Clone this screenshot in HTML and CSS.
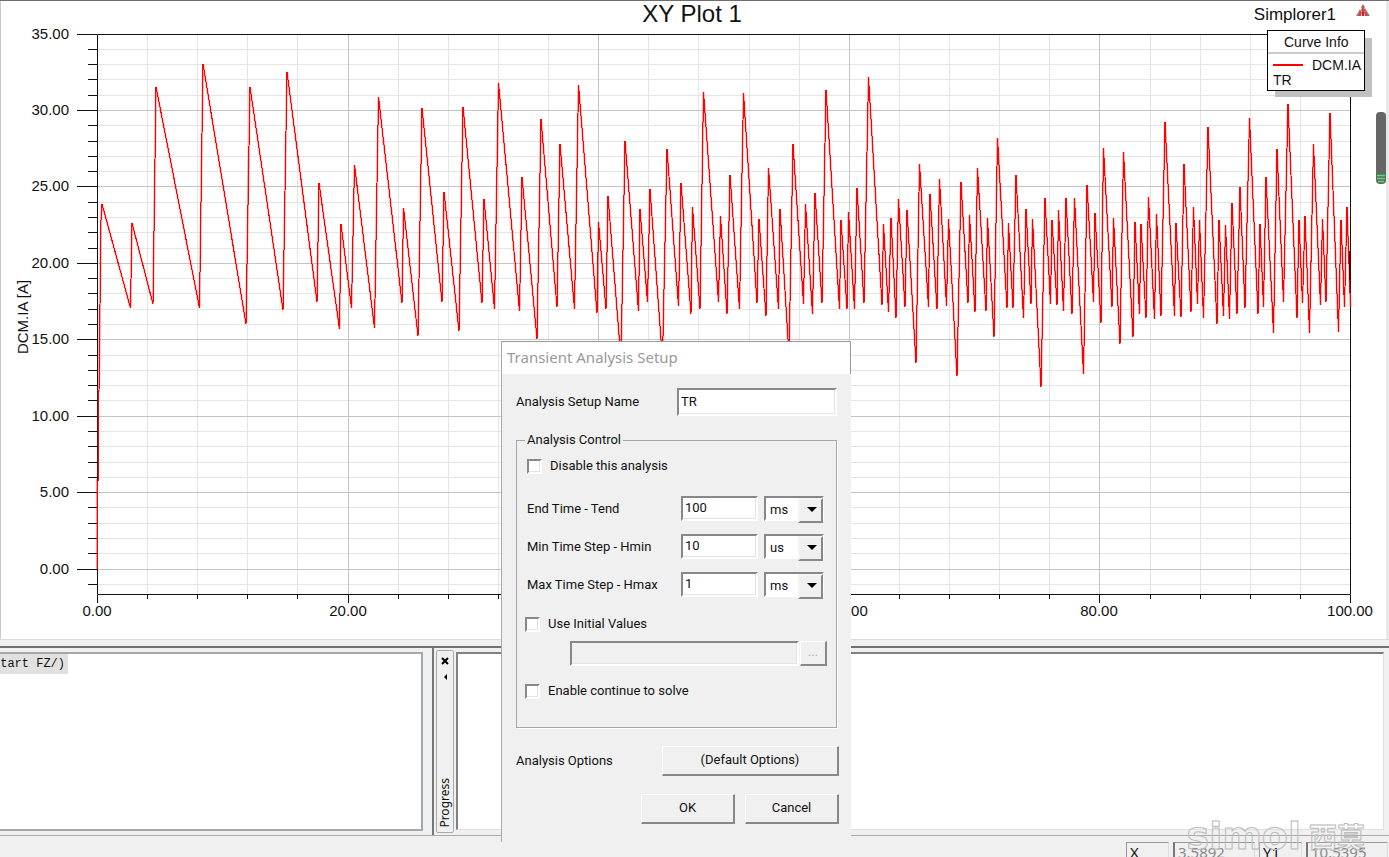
FILE: index.html
```html
<!DOCTYPE html>
<html lang="en">
<head>
<meta charset="utf-8">
<title>XY Plot 1</title>
<link rel="stylesheet" href="styles.css">
</head>
<body>
<main class="plot">
  <svg class="chart" viewBox="0 0 1389 640" role="img" aria-label="XY Plot 1, DCM.IA over time">
    <g id="grid"></g>
    <g id="axes"></g>
    <polyline class="curve curve-soft"/>
    <polyline class="curve curve-core"/>
    <path class="end-mark" d="M1350 251V280"/>
    <text class="title" x="692" y="22">XY Plot 1</text>
    <text class="axis-name" transform="translate(28 317) rotate(-90)">DCM.IA [A]</text>
    <text class="project" x="1336" y="20">Simplorer1</text>
    <path fill="#8a8a8a" d="M1363 4l2 3-2 3-2-3zM1365 8l5 8h-4l-2-5zM1360 9l1 2-2 5h-3z"/>
    <path fill="#e23b3b" d="M1363 6l2 4-1 2h-2l-1-2zM1360 11l2 1-1 4h-3zM1364 12l2 0 2 4h-3z"/>
    <path fill="#d02020" d="M1362 12h2v4h-2z"/>
    <rect class="legend-shadow" x="1275" y="38" width="97" height="59"/>
    <rect class="legend-box" x="1267.5" y="30.5" width="97" height="60"/>
    <path class="legend-rule" d="M1268 53H1364"/>
    <path class="legend-key" d="M1273 65H1303"/>
    <text class="legend-text" x="1284" y="47">Curve Info</text>
    <text class="legend-text" x="1312" y="70">DCM.IA</text>
    <text class="legend-text" x="1273" y="85">TR</text>
    <rect x="1376" y="112" width="10" height="72" rx="4" fill="#666"/>
    <path d="M1377 175.500H1385M1377 178.500H1385M1378 181.500H1384" stroke="#4be36a" stroke-width="1.500" fill="none"/>
  </svg>
</main>

<section class="docks">
  <div class="dock messages"><div class="message-list"><span class="message">tart FZ/)</span></div></div>
  <div class="dock progress">
    <div class="dock-tab">
      <button class="tab-button" aria-label="Close"><svg width="8" height="8" viewBox="0 0 8 8"><path d="M1 1L7 7M7 1L1 7" stroke="#000" stroke-width="2"/></svg></button>
      <button class="tab-button" aria-label="Collapse"><svg width="8" height="8" viewBox="0 0 8 8"><path d="M6 1V7L3 4z"/></svg></button>
      <span class="dock-title">Progress</span>
    </div>
    <div class="progress-view"></div>
  </div>
</section>

<footer class="status">
  <span class="cell name">X</span><span class="cell value">3.5892</span>
  <span class="cell name">Y1</span><span class="cell value">10.5395</span>
</footer>
<div class="watermark" aria-hidden="true"><span class="mark-latin">simol</span><span class="mark-cjk">西莫</span></div>

<form class="dialog" role="dialog" aria-labelledby="dialog-title">
  <h1 class="dialog-title" id="dialog-title">Transient Analysis Setup</h1>
  <div class="dialog-body">
    <div class="row name-row">
      <label for="setup">Analysis Setup Name</label>
      <input class="box" id="setup" type="text" value="TR">
    </div>
    <fieldset class="group">
      <legend>Analysis Control</legend>
      <label class="check first"><input type="checkbox">Disable this analysis</label>
      <div class="times">
        <label for="tend">End Time - Tend</label>
        <input class="box" id="tend" type="text" value="100">
        <span class="combo"><select aria-label="End time unit"><option>ms</option><option>us</option></select></span>
        <label for="hmin">Min Time Step - Hmin</label>
        <input class="box" id="hmin" type="text" value="10">
        <span class="combo"><select aria-label="Min step unit"><option>us</option><option>ms</option></select></span>
        <label for="hmax">Max Time Step - Hmax</label>
        <input class="box" id="hmax" type="text" value="1">
        <span class="combo"><select aria-label="Max step unit"><option>ms</option><option>us</option></select></span>
      </div>
      <label class="check"><input type="checkbox">Use Initial Values</label>
      <div class="file-row">
        <input class="box" type="text" aria-label="Initial values file" disabled>
        <button class="push browse" type="button" disabled>...</button>
      </div>
      <label class="check"><input type="checkbox">Enable continue to solve</label>
    </fieldset>
    <div class="row options-row">
      <span>Analysis Options</span>
      <button class="push wide" type="button">(Default Options)</button>
    </div>
    <div class="actions">
      <button class="push" type="button">OK</button>
      <button class="push" type="button">Cancel</button>
    </div>
  </div>
</form>
<script src="chart.js"></script>
</body>
</html>
```
FILE: styles.css
```css
* { box-sizing: border-box; }
body {
  margin: 0;
  height: 100vh;
  display: flex;
  flex-direction: column;
  overflow: hidden;
  position: relative;
  background: #f0f0f0;
  color: #111;
  font: 13px/18px Roboto, "Liberation Sans", sans-serif;
}
button, input, select { font: inherit; color: inherit; }

.plot {
  flex: none;
  background: #fff;
  border: solid #dcdcdc;
  border-width: 0 0 1px;
  box-shadow: inset 0 1px #6e6e6e, inset 1px 0 #c8c8c8, inset -3px 0 #e8e8e8;
}
.chart { display: block; width: 100%; height: auto; margin-bottom: -1px; font-family: "Liberation Sans", Arial, sans-serif; }
.chart text { fill: #111; }
.grid-minor { stroke: #e5e5e5; fill: none; }
.grid-major { stroke: #c4c4c4; fill: none; }
.axis { stroke: #111; fill: none; }
.curve { stroke: #f00; fill: none; }
.curve-soft { stroke-width: 2px; opacity: 0.4; }
.curve-core { shape-rendering: crispEdges; }
.end-mark { stroke: #500; stroke-width: 2px; }
.tick { font-size: 15px; }
.tick.y { text-anchor: end; }
.tick.x, .title, .axis-name { text-anchor: middle; }
.axis-name { font-size: 15px; }
.title { font-size: 24px; }
.project { font-size: 17px; text-anchor: end; }
.legend-shadow { fill: #c0c0c0; }
.legend-box { fill: #fff; stroke: #000; }
.legend-rule { stroke: #ccc; stroke-width: 2px; }
.legend-key { stroke: #f00; stroke-width: 2px; }
.legend-text { font-size: 14px; }

.docks {
  flex: 1;
  min-height: 0;
  display: flex;
  margin-top: 6px;
  border-top: 2px solid #707070;
  border-bottom: 1px solid #aaa;
}
.messages { width: 31.250%; flex: none; padding: 4px 9px 4px 0; border-right: 2px solid #777; }
.message-list { height: 100%; background: #fff; border: 2px solid #a2a8ae; border-left: 0; }
.message {
  display: flex;
  justify-content: flex-end;
  width: 68px;
  height: 20px;
  padding-right: 3px;
  overflow: hidden;
  white-space: nowrap;
  background: #e1e1e1;
  font: 12px/20px "Liberation Mono", monospace;
}
.progress { flex: 1; display: flex; gap: 2px; padding: 2px 5px 2px 2px; }
.dock-tab {
  width: 18px;
  display: flex;
  flex-direction: column;
  align-items: center;
  gap: 8px;
  padding: 6px 0 4px;
  border: 1px solid #aaa;
  border-radius: 2px;
}
.tab-button { display: block; width: 8px; height: 8px; padding: 0; border: 0; background: none; line-height: 0; }
.dock-title {
  margin-top: auto;
  writing-mode: vertical-rl;
  transform: rotate(180deg);
  font: 12px/16px "Noto Sans", sans-serif;
}
.progress-view { flex: 1; margin: 2px 0 3px; background: #fff; border: 1px solid #e0e0e0; border-top: 2px solid #808080; border-left: 2px solid #808080; }

.status {
  flex: none;
  height: 21px;
  display: flex;
  justify-content: flex-end;
  gap: 4px;
  padding: 6px 1px 0 0;
  overflow: hidden;
  font: 15px/19px "Noto Sans", sans-serif;
}
.cell { height: 24px; padding-left: 3px; border: solid #999; border-width: 1px 0 0 1px; border-right: 1px solid #ddd; }
.cell.name { width: 43px; }
.cell.value { width: 82px; color: #888; border-left: 2px solid #777; }
.watermark {
  position: absolute;
  right: 24px;
  bottom: 2px;
  display: flex;
  gap: 8px;
  color: transparent;
  -webkit-text-stroke: 1px #bbb;
}
.mark-latin { font: bold 38px/38px "DejaVu Sans", sans-serif; }
.mark-cjk { font: bold 28px/38px "Noto Sans CJK SC", sans-serif; }

.dialog {
  position: absolute;
  left: 501px;
  top: 341px;
  width: 350px;
  background: #f0f0f0;
  border-left: 1px solid #aaa;
}
.dialog-title {
  margin: 0;
  height: 33px;
  padding-left: 5px;
  background: #fff;
  border: solid #999;
  border-width: 1px 1px 0 0;
  color: #999;
  font: 15px/31px "Noto Sans", sans-serif;
}
.dialog-body { padding: 14px 14px 18px 14px; }
.row { display: flex; align-items: center; justify-content: space-between; }
.box {
  min-width: 0;
  height: 25px;
  padding: 0 2px 2px;
  background: #fff;
  border: 2px solid #fff;
  border-top-color: #888;
  border-left-color: #888;
  box-shadow: inset -1px -1px #e3e3e3;
}
.box:disabled { background: #f0f0f0; }
.name-row .box { width: 160px; height: 28px; }
.group {
  margin: 15px 0 0;
  padding: 8px 12px 27px 8px;
  border: 1px solid #a5a5a5;
  box-shadow: 1px 1px #fff;
}
.group legend { padding: 0 2px; }
.check { display: flex; align-items: center; gap: 8px; }
.check.first { padding-left: 2px; }
.check input {
  appearance: none;
  width: 15px;
  height: 15px;
  margin: 0;
  background: #fff;
  border: 2px solid #fff;
  border-top-color: #888;
  border-left-color: #888;
  box-shadow: inset -1px -1px #e3e3e3;
}
.times {
  display: grid;
  grid-template-columns: 1fr 77px 60px;
  column-gap: 6px;
  row-gap: 13px;
  align-items: center;
  margin: 21px 0 18px;
  padding-left: 2px;
}
.combo { position: relative; height: 25px; }
.combo select {
  appearance: none;
  width: 100%;
  height: 100%;
  padding: 2px 20px 0 4px;
  background: #fff;
  border: 2px solid #fff;
  border-top-color: #888;
  border-left-color: #888;
  border-radius: 0;
}
.combo::before {
  content: "";
  position: absolute;
  right: 1px;
  top: 2px;
  width: 21px;
  height: 21px;
  background: #f0f0f0;
  border: 2px solid #888;
  border-top-color: #f4f4f4;
  border-left-color: #f4f4f4;
  pointer-events: none;
}
.combo::after {
  content: "";
  position: absolute;
  right: 7px;
  top: 11px;
  border: 5px solid transparent;
  border-top-color: #000;
  border-bottom: 0;
  pointer-events: none;
}
.file-row { display: flex; gap: 1px; margin: 8px -3px 16px 0; padding-left: 45px; }
.file-row .box { flex: 1; }
.push {
  height: 30px;
  width: 94px;
  padding: 0 0 2px;
  background: #f0f0f0;
  border: 2px solid #888;
  border-top: 1px solid #fff;
  border-left: 1px solid #fff;
}
.push.browse { width: 27px; height: 25px; color: #aaa; }
.push.wide { width: 177px; }
.options-row, .actions { margin-right: -2px; }
.options-row { margin-top: 18px; }
.actions { display: flex; justify-content: flex-end; gap: 10px; margin-top: 18px; }
```
FILE: chart.js
```js
const X0 = 97, X1 = 1350, Y35 = 34, Y0 = 569, BOTTOM = 595;
const sx = t => Math.round(X0 + t * (X1 - X0) / 100);
const sy = v => Math.floor(Y0 - v * (Y0 - Y35) / 35);
const grid = document.getElementById("grid");
const axes = document.getElementById("axes");

function add(parent, name, attrs, text) {
  const el = document.createElementNS("http://www.w3.org/2000/svg", name);
  for (const k in attrs) el.setAttribute(k, attrs[k]);
  if (text) el.textContent = text;
  parent.appendChild(el);
}

let minor = "", major = "", ticks = "";
for (let v = -1; v <= 35; v++) {
  const big = v % 5 === 0, y = sy(v) + 0.5;
  const line = `M${X0} ${y}H${X1}`;
  if (big) major += line; else minor += line;
  ticks += `M${big ? 77 : 88} ${y}H${X0}`;
  if (big) add(axes, "text", { class: "tick y", x: 69, y: sy(v) + 5 }, v.toFixed(2));
}
for (let t = 0; t <= 100; t += 4) {
  const big = t % 20 === 0, x = sx(t) + 0.5;
  const line = `M${x} ${Y35}V${BOTTOM}`;
  if (big) major += line; else minor += line;
  ticks += `M${x} ${BOTTOM}V${big ? 603 : 599}`;
  if (big) add(axes, "text", { class: "tick x", x: sx(t), y: 616 }, t.toFixed(2));
}
add(grid, "path", { class: "grid-minor", d: minor });
add(grid, "path", { class: "grid-major", d: major });
add(axes, "path", { class: "axis", d: ticks + `M${X0 + 0.5} ${Y35 + 0.5}H${X1 + 0.5}V${BOTTOM - 0.5}H${X0 + 0.5}Z` });

const points = `
97,569 97,480 98,480 98,391 99,391 100,305 101,220 102,204 130.5,308 132,223 153,304 156,87 199.5,308 203,64 246,324 250,87 283,310 287,72 317,302 319,183 339.5,329 341,224 351.5,308
354.5,165 374.5,328 378.5,97 402,303 403.5,208 418,336 422,108 442,302 444,192 459,331 463,107 482,303 484,199 494.5,309 498.5,83 519.5,311 522,177 537,339 541,119 557,307 560,144 574.5,309 578.5,85 597,313 598.5,222 606,309 608,196 621,360 625,141 638.5,311 640,209 647.5,302 650,189 662.5,360 667,149 678.5,306 681,183 691,314 692.5,207 700,309
703.5,92 718.5,302 720.5,216 727,314 730,175 739.5,309 743.5,93 757,303 759,219 766,316 768.5,168 778.5,309 780,209 789,355 793,144 803.5,304 805.5,204 812.5,314 815,193 822,303 826,90 839.5,309 841,220 847,309 848.5,212 854.5,309 857,188 864,303 868.5,77 882,305 883.5,224 888.5,312 891,218 896,318 898.5,199 905,307 907,210 916,363 919.5,164 928.5,307 930,194 937,309 939.5,179 946.5,306 948.5,219 957,376 961,182 968,303 969.5,215 975,312 977.5,168 986,311 987.5,218 994,337 997.5,138 1007,308 1008.5,223 1013,308 1016,175 1023.5,318 1026,209 1031,304 1032.5,219 1041,387 1045,198 1050.5,304
1052,220 1057,305 1058.5,210 1063.5,311 1066,198 1072,314 1074.5,198 1083.5,374 1087,185 1093.5,302 1095,213 1101,323 1103.5,148 1112,307 1113.5,218 1120,344 1123.5,152 1133,337 1135,222 1139.5,314 1141,224 1146,318 1148.5,197 1154.5,319 1156.5,214 1161,316 1165,122 1174.5,316 1176,223 1181,317 1184,164 1191,312 1193.5,207 1197.5,304 1199.5,220 1203.5,318 1208,127 1217,324 1219,220 1223.5,316 1225.5,225 1229.5,319 1232,203 1237,314 1240,187 1245,308 1249.5,118 1258,314 1260,224 1263.5,307 1266,177 1273.5,333 1277,149 1283.5,302 1288,104 1297,318 1299,220 1302.5,303 1305,216 1309.5,333 1313.5,144 1320.5,305 1322.5,219 1326,302 1330,113 1338.5,332 1341,220 1344.5,307 1347,207 1350.5,307`.trim();
for (const line of document.querySelectorAll(".curve")) line.setAttribute("points", points);
```
